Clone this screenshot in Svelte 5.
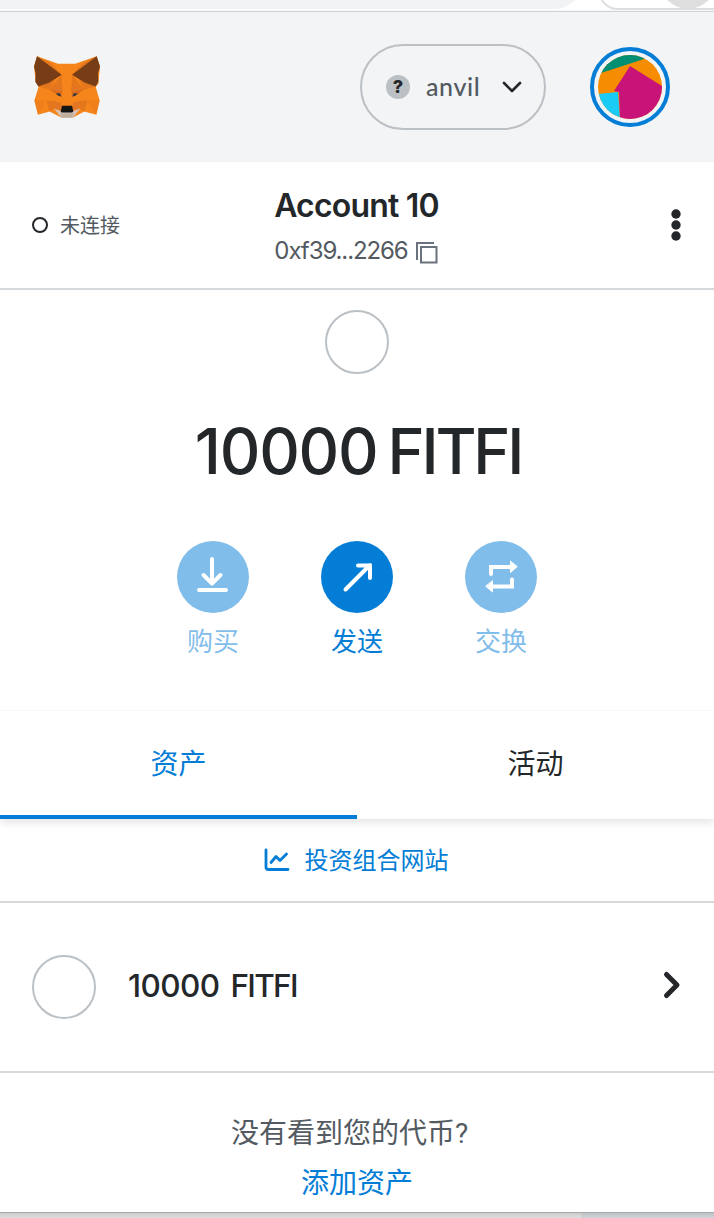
<script>
  const actions = [
    { label: '购买', icon: 'buy', disabled: true },
    { label: '发送', icon: 'send', disabled: false },
    { label: '交换', icon: 'swap', disabled: true }
  ];
</script>

<div class="page">
  <div class="browser"><div class="address"></div><div class="pill"><i></i></div></div>
  <header>
    <svg class="fox" viewBox="41 49 198 185" width="66" height="62">
      <path fill="#f6851b" d="M50 49 113 72H165L229 49 239 80 234 132 226 141 238 182 228 225 192 215 158 233H122L88 215 53 225 42 182 55 141 46 127 41 80z"/>
      <path fill="#e4761b" d="M50 49 124 105 92 70zM229 49 155 105 188 70zM55 140 105 119 88 150zM226 140 175 119 191 150z"/>
      <path fill="#763d16" d="M50 49 41 80 46 101 45 126 54 140 86 129 124 105zM229 49 239 80 233 101 234 126 226 140 194 129 155 105z"/>
      <path fill="#e4761b" d="M124 105 126 150 88 150zM155 105 153 150 191 150zM78 183H104L101 207 88 215zM202 183H175L179 207 192 215z"/>
      <path fill="#f6851b" d="M124 105H155L153 150 156 198H124L126 150z"/>
      <path fill="#d96c1c" d="M88 150H126L123 172 106 162zM191 150H153L156 172 173 162z"/>
      <path fill="#e27625" d="M88 150 126 136 123 156zM191 150 153 136 156 156zM104 184 123 190 124 213 102 206zM175 184 157 190 155 213 178 206z"/>
      <path fill="#e4761b" d="M42 182 78 183 53 225zM238 182 202 183 228 225z" opacity=".4"/>
      <path fill="#d7c1b3" d="M101 206 123 214H157L180 206 158 233H122z"/>
      <path fill="#c0ad9e" d="M119 221H161L155 233H124z"/>
      <path fill="#233447" d="M106 162 118 160 123 170 115 168zM173 162 161 160 156 170 164 168z"/>
      <path fill="#161616" d="M125 198H155L159 215 155 218H124L121 215z"/>
    </svg>
    <div class="network">
      <b class="question">?</b><span>anvil</span>
      <svg width="22" height="16" viewBox="0 0 22 16"><path d="M3 4l8 8 8-8" fill="none" stroke="#24272a" stroke-width="2.6" stroke-linecap="round" stroke-linejoin="round"/></svg>
    </div>
    <div class="avatar">
      <svg width="64" height="64" viewBox="0 0 64 64">
        <defs><clipPath id="disc"><circle cx="32" cy="32" r="32"/></clipPath></defs>
        <g clip-path="url(#disc)">
          <path fill="#f68c00" d="M0 0h64v64H0z"/><path fill="#008f72" d="M0 0h64L46 4 3 18l-3 2z"/>
          <path fill="#1accf5" d="M0 39l20-2 2 27H0z"/><path fill="#c81478" d="M32 11l32 20v33H22l-1-27-5-1z"/>
        </g>
      </svg>
    </div>
  </header>

  <section class="account">
    <div class="status"><i></i><span>未连接</span></div>
    <div class="identity">
      <div class="name">Account 10</div>
      <div class="address-line"><span>0xf39...2266</span>
        <svg width="24" height="24" viewBox="0 0 24 24"><path d="M2 20V3h17M6 7h15.500v15.500H6z" fill="none" stroke="#6a737d" stroke-width="2"/></svg>
      </div>
    </div>
    <svg class="more" width="10" height="32" viewBox="0 0 10 32"><g fill="#24272a"><circle cx="5" cy="5" r="4.700"/><circle cx="5" cy="16" r="4.700"/><circle cx="5" cy="27" r="4.700"/></g></svg>
  </section>

  <section class="overview">
    <div class="token"></div>
    <div class="balance"><span>10000</span><span class="symbol">FITFI</span></div>
    <div class="actions">
      {#each actions as a}
        <div class="action" class:disabled={a.disabled}>
          <div class="round">
            <svg width="72" height="72" viewBox="0 0 72 72" fill="none" stroke="#fff" stroke-width="4" stroke-linecap="round" stroke-linejoin="round">
              {#if a.icon === 'buy'}
                <path d="M35 18v24M26.500 34l8.500 8.500 8.500-8.500M22 49h27"/>
              {:else if a.icon === 'send'}
                <path d="M24.500 48.500 49 24M37 24.500h12V37"/>
              {:else}
                <path stroke-linejoin="miter" d="M26 33V26h19M47 38.500V45.500H28"/>
                <path fill="#fff" stroke-width="1" d="M45.500 20.500v11l6.500-5.700zM27.500 40v11L21 45.500z"/>
              {/if}
            </svg>
          </div>
          <span>{a.label}</span>
        </div>
      {/each}
    </div>
  </section>

  <nav><div class="tab active">资产</div><div class="tab">活动</div></nav>
  <div class="portfolio">
    <svg width="26" height="24" viewBox="0 0 26 24" fill="none" stroke="#037dd6" stroke-width="2.800" stroke-linecap="round" stroke-linejoin="round"><path d="M2 2v17q0 2.500 2.500 2.500H24M7 14.500l5-6 4 4L22.500 6"/></svg>
    <span>投资组合网站</span>
  </div>
  <div class="asset">
    <div class="token"></div>
    <div class="asset-text"><span>10000</span><span class="unit">FITFI</span></div>
    <svg width="20" height="30" viewBox="0 0 20 30"><path d="M4.500 4.500 15 15 4.500 25.500" fill="none" stroke="#24272a" stroke-width="5" stroke-linecap="round" stroke-linejoin="round"/></svg>
  </div>
  <footer><div class="missing">没有看到您的代币<span>?</span></div><div class="add">添加资产</div></footer>
  <div class="below"><div></div></div>
</div>

<style>
  :global(body) { background: #fff; }
  .page { width: 714px; height: 1218px; overflow: hidden; display: flex; flex-direction: column; background: #fff; color: #24272a; font-family: Roboto, "Noto Sans CJK SC", sans-serif; }
  .page > * { box-sizing: border-box; flex-shrink: 0; }
  svg { display: block; flex-shrink: 0; }
  .browser { height: 12px; border-bottom: 1px solid #cfd2d4; display: flex; justify-content: space-between; overflow: hidden; align-items: flex-end; background: linear-gradient(#fff 9px, #f5f5f6); }
  .address { width: 584px; height: 60px; margin-bottom: 2px; background: #f1f3f4; border-radius: 0 0 30px 0; flex-shrink: 0; }
  .pill { box-sizing: border-box; width: 120px; height: 40px; margin: 0 -4px 1px 0; border: 2px solid #dddedf; border-radius: 20px 0 0 20px; display: flex; align-items: flex-end; justify-content: flex-end; flex-shrink: 0; }
  .pill i { width: 56px; height: 56px; margin-bottom: -1px; border-radius: 50%; background: #dedede; flex-shrink: 0; }
  header { height: 150px; padding: 0 44px 0 34px; background: #f2f4f6; display: flex; align-items: center; }
  .fox { margin-right: auto; }
  .network { box-sizing: border-box; width: 186px; height: 86px; border: 2px solid #bbc0c5; border-radius: 43px; display: flex; align-items: center; padding-left: 24px; font: 500 25px Lato, sans-serif; color: #535a61; }
  .network span { width: 54px; margin: -3px 21px 0 16px; letter-spacing: .6px; }
  .question { width: 24px; height: 24px; border-radius: 50%; background: #bbc0c5; color: #24272a; text-align: center; font: 800 18px/24px Inter, sans-serif; }
  .avatar { box-sizing: border-box; width: 80px; height: 80px; margin-left: 44px; padding: 4px; border: 4px solid #037dd6; border-radius: 50%; }
  .account { height: 128px; border-bottom: 2px solid #d6d9dc; padding: 0 33px 0 32px; display: grid; grid-template-columns: 200px 1fr 200px; align-items: center; }
  .status { display: flex; align-items: center; gap: 12px; font-size: 20px; line-height: 28px; color: #535a61; }
  .status span { margin-top: 2px; }
  .status i { box-sizing: border-box; width: 16px; height: 16px; border: 2px solid #24272a; border-radius: 50%; }
  .identity { display: flex; flex-direction: column; align-items: center; }
  .name { padding-top: 3px; font: 600 32px/44px Inter, sans-serif; letter-spacing: -.8px; white-space: nowrap; }
  .address-line { margin-top: 5px; height: 36px; display: flex; align-items: center; gap: 7px; font: 400 24px/36px Inter, sans-serif; letter-spacing: -1.100px; color: #535a61; white-space: nowrap; }
  .address-line svg { margin-top: 2px; }
  .more { justify-self: end; }
  .overview { height: 420px; padding-top: 20px; display: flex; flex-direction: column; align-items: center; }
  .token { box-sizing: border-box; width: 64px; height: 64px; border: 2px solid #bbc0c5; border-radius: 50%; flex-shrink: 0; }
  .balance { height: 80px; margin-top: 37px; padding-left: 2px; display: flex; gap: 10px; font: 500 63px/80px Inter, sans-serif; letter-spacing: -1.200px; }
  .symbol { letter-spacing: -3.200px; }
  .actions { margin-top: 50px; display: flex; gap: 72px; }
  .action { width: 72px; display: flex; flex-direction: column; align-items: center; color: #037dd6; font-size: 26px; line-height: 36px; white-space: nowrap; }
  .action.disabled { opacity: .5; }
  .round { width: 72px; height: 72px; border-radius: 50%; background: #037dd6; margin-bottom: 11px; }
  nav { height: 109px; display: flex; border-top: 1px solid #f8f8f8; box-shadow: 0 4px 8px #0000001a; clip-path: inset(0 0 -16px 0); }
  .tab { box-sizing: border-box; flex: 1; padding: 34px 0 30px; text-align: center; font-size: 28px; line-height: 40px; }
  .tab.active { color: #037dd6; border-bottom: 4px solid #037dd6; }
  .portfolio { height: 84px; padding-right: 2px; border-bottom: 2px solid #d6d9dc; display: flex; align-items: center; justify-content: center; gap: 15px; color: #037dd6; font-size: 24px; line-height: 36px; }
  .portfolio span { margin-top: 1px; }
  .asset { height: 170px; padding: 0 32px; border-bottom: 2px solid #d6d9dc; display: flex; align-items: center; }
  .asset > svg { margin-top: -4px; }
  .asset-text { flex: 1; margin: -2px 0 0 32px; display: flex; gap: 11px; font: 500 31.500px/40px Inter, sans-serif; letter-spacing: -.600px; }
  .unit { letter-spacing: -1.700px; }
  footer { height: 140px; padding-top: 41px; text-align: center; font-size: 28px; line-height: 40px; color: #535a61; border-bottom: 1px solid #a6a8aa; }
  .missing span { display: inline-block; width: 28px; text-align: left; }
  .add { margin-top: 10px; color: #037dd6; }
  .below { height: 5px; background: linear-gradient(#ccc, #dedede); }
  .below div { height: 5px; margin-left: 581px; background: linear-gradient(#bec2c6, #d0d4d8); }
</style>
